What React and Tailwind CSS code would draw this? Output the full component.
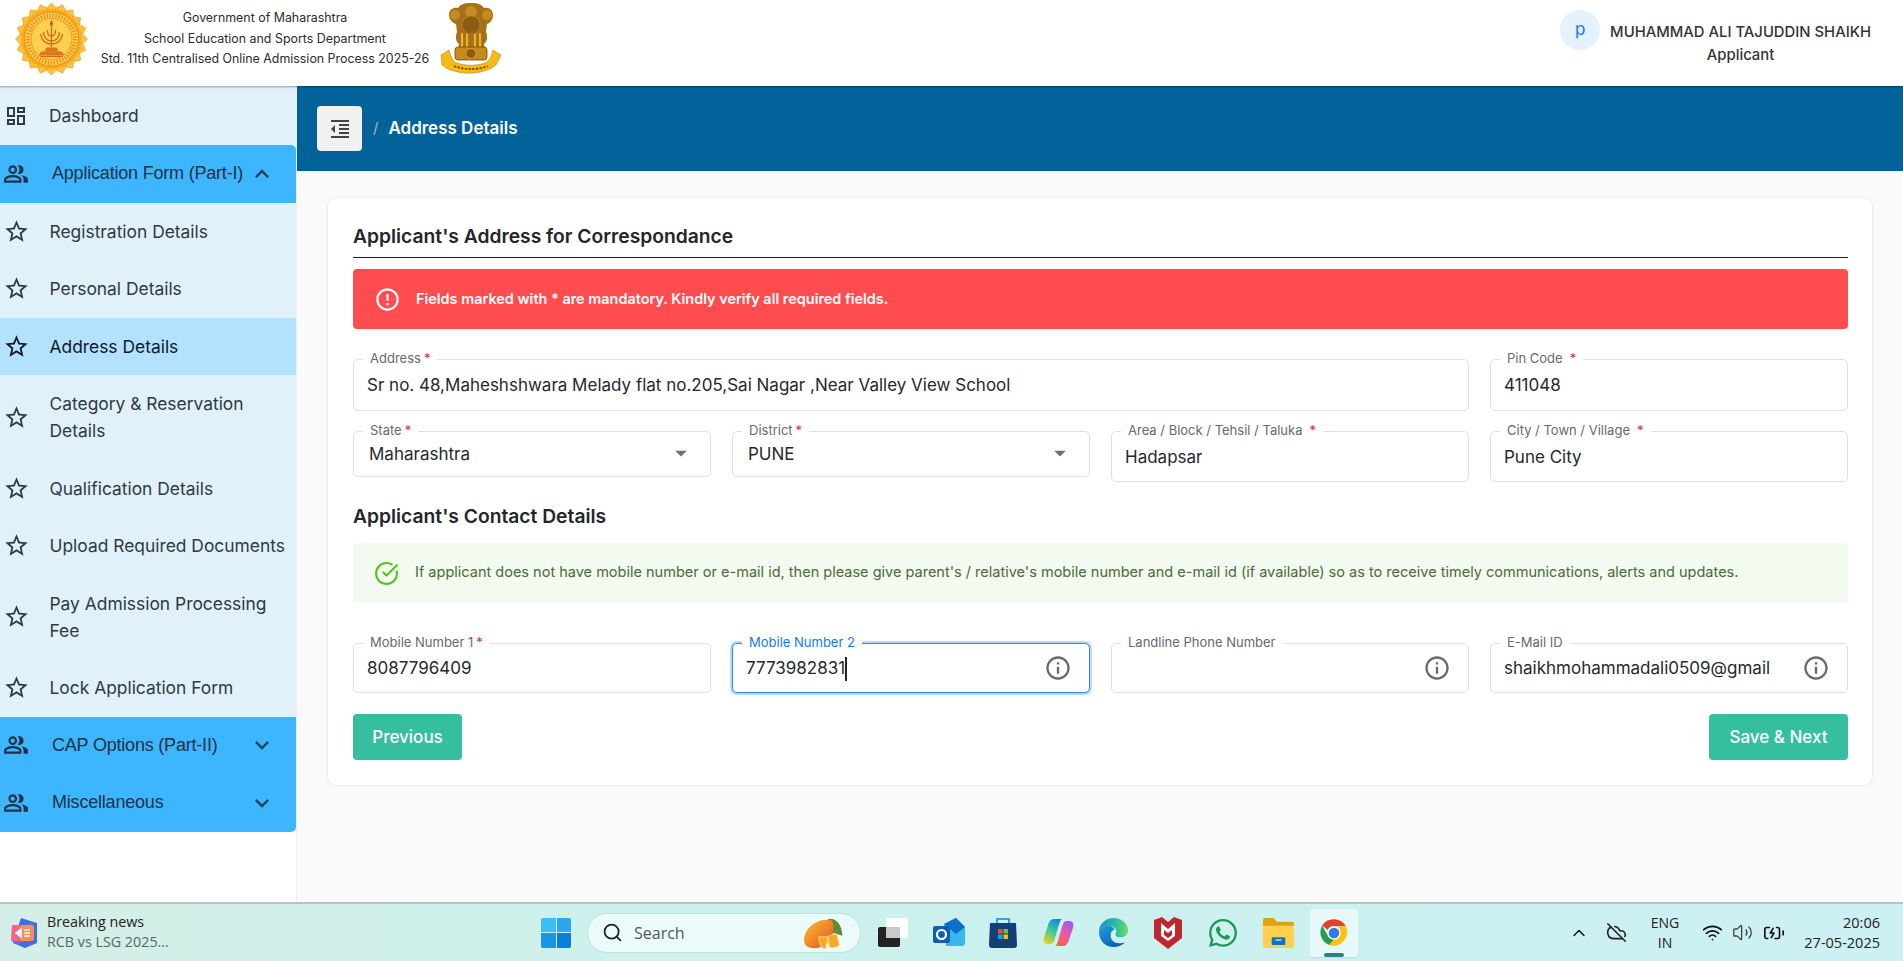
import { MdOutlineDashboard, MdOutlinePeopleAlt, MdStarBorder, MdExpandLess, MdExpandMore, MdFormatIndentDecrease, MdInfoOutline, MdErrorOutline, MdArrowDropDown } from 'react-icons/md'
import { FaWhatsapp } from 'react-icons/fa'
import { CircleCheckBig, Search, ChevronUp, CloudOff, Wifi, Volume2, BatteryCharging } from 'lucide-react'

function Seal() {
  const teeth = Array.from({ length: 20 }, (_, i) => i * 18)
  return (
    <svg viewBox="0 0 72 72" className="w-[73px] h-[72px]">
      {teeth.map(a => <path key={a} d="M30 6 36 0l6 6-6 6z" fill="#fbc23a" stroke="#f0961f" strokeWidth=".6" transform={`rotate(${a} 36 36)`} />)}
      <circle cx="36" cy="36" r="30" fill="#f9a91f" />
      <circle cx="36" cy="36" r="27" fill="#fcd04a" stroke="#ea8a18" strokeWidth="1" />
      <circle cx="36" cy="36" r="23.500" fill="none" stroke="#e07f16" strokeWidth="4" strokeDasharray="1.500 1.500" opacity=".75" />
      <circle cx="36" cy="36" r="20.500" fill="#fdd04f" stroke="#e88a1a" strokeWidth=".8" />
      <path d="M36 17c1.800 2.500 2.500 4.500 0 7-2.500-2.500-1.800-4.500 0-7z" fill="#d9601b" />
      <path d="M36 24v20M25 31c1 6 5 10 11 10s10-4 11-10M28 29c0 5 3 9 8 9s8-4 8-9M32 27c-.5 3 1 6 4 6s4.500-3 4-6" fill="none" stroke="#d4691a" strokeWidth="1.300" />
      <path d="M31 45h10l1 3H30zM26 49h20l2 3H24zM25 53.500h22" fill="#e27d1b" stroke="#d4691a" strokeWidth="1" />
    </svg>
  )
}

function Emblem() {
  return (
    <svg viewBox="0 0 62 72" className="w-[62px] h-[72px]">
      <path d="M9 12c0-6 5-8 9-7 2-3 5-5 13-5s11 2 13 5c4-1 9 1 9 7 0 5-3 8-6 9l-1 8c2 5 1 10-2 12l1 5H18l1-5c-3-2-4-7-2-12l-1-8c-3-1-7-4-7-9z" fill="#a5701a" />
      <circle cx="15" cy="12" r="5" fill="#c48b22" />
      <circle cx="47" cy="12" r="5" fill="#c48b22" />
      <circle cx="31" cy="9" r="6" fill="#c48b22" />
      <circle cx="31" cy="22" r="9" fill="#8c5c14" stroke="#c99426" strokeWidth="1" strokeDasharray="1.500 1" />
      <path d="M22 30v14M27 31v13M35 31v13M40 30v14" stroke="#f2b11f" strokeWidth="2.200" />
      <rect x="15" y="44" width="32" height="13" rx="3" fill="#c6891c" stroke="#6f4a10" strokeWidth=".8" />
      <circle cx="31" cy="50.500" r="5" fill="#8c5c14" stroke="#e2ab2a" strokeWidth=".8" />
      <path d="M1 52 9 47c2 8 4 11 8 13 9 3 19 3 28 0 4-2 6-5 8-13l8 5-5 10c-5 4-8 5-12 6-10 3-20 3-30 0-4-1-7-2-12-6z" fill="#f5bb14" stroke="#a97810" strokeWidth=".5" />
      <path d="M14 63c10 4 24 4 34 0" fill="none" stroke="#7d5710" strokeWidth="1.800" strokeDasharray="2.500 1.200" />
    </svg>
  )
}

function SideItem({ label, active }) {
  return (
    <div className={`flex items-center pl-[6px] py-[15.250px] ${active ? 'bg-[#b2e2ff] text-[#111827]' : 'text-[#2f3a42]'}`}>
      <MdStarBorder className="w-[27px] h-[27px] shrink-0 -ml-[3px]" />
      <span className="ml-[19.500px] max-w-[240px] leading-[27px] text-[17.400px]">{label}</span>
    </div>
  )
}

function SideGroup({ label, open, rounded }) {
  return (
    <div className={`h-[57.500px] flex items-center bg-[#3db6ff] text-[#1f3347] ${rounded}`}>
      <MdOutlinePeopleAlt className="w-[26px] h-[26px] ml-[3px] shrink-0" />
      <span className="ml-[23px] w-[196px] text-[18px] font-['Liberation_Sans',sans-serif] tracking-[-0.2px]">{label}</span>
      {open ? <MdExpandLess className="w-[28px] h-[28px] text-[#1d4560]" /> : <MdExpandMore className="w-[28px] h-[28px] text-[#1d4560]" />}
    </div>
  )
}

function Field({ label, star, value, h = 'h-[51px]', focused, info, select, starGap, caret }) {
  return (
    <div className={`relative rounded-[5px] flex items-center pt-[2px] text-[#26292c] text-[17px] bg-white ${select ? 'pl-[15px]' : 'pl-[13px]'} ${h} ${focused ? 'border border-[#2f86f0] shadow-[0_0_0_2px_#b9d8fb]' : 'border-[1.500px] border-[#dfe0e2]'}`}>
      <span className={`absolute -top-[10px] left-[9px] px-[7px] bg-white text-[13px] leading-[16px] whitespace-nowrap ${focused ? 'text-[#1677ff]' : 'text-[#66696d]'}`}>
        {label}
        {star && <span className={`text-[#e9262c] ${starGap ? 'ml-[7px]' : 'ml-[3px]'}`}>*</span>}
      </span>
      <span className={`overflow-hidden whitespace-nowrap ${info ? 'max-w-[268px]' : ''}`}>{value}</span>
      {caret && <span className="w-[2px] h-[24px] bg-[#1f2430]" />}
      {info && <MdInfoOutline className="absolute right-[17px] top-[10px] w-[28px] h-[28px] text-[#666a6e]" />}
      {select && <MdArrowDropDown className="absolute right-[15px] top-[7px] w-[28px] h-[28px] text-[#6d6f72]" />}
    </div>
  )
}

function Chrome() {
  return (
    <svg viewBox="0 0 48 48" className="w-[30px] h-[30px]">
      <path d="M24 2a22 22 0 0 1 19 11H24a11 11 0 0 0-10 6L5 12A22 22 0 0 1 24 2z" fill="#e0402f" />
      <path d="M5 12l9 16a11 11 0 0 0 11 6l-9 9A22 22 0 0 1 5 12z" fill="#2b9d48" />
      <path d="M43 13a22 22 0 0 1-27 30l9-9a11 11 0 0 0 8-15 11 11 0 0 0-3-6z" fill="#fbc116" />
      <circle cx="24" cy="24" r="10.500" fill="#fff" />
      <circle cx="24" cy="24" r="8.500" fill="#2f7be5" />
    </svg>
  )
}

function TaskIcons() {
  return (
    <div className="flex items-center">
      {/* task view */}
      <div className="w-[32px] h-[30px] ml-[17px] relative">
        <div className="absolute left-[8px] top-0 w-[22px] h-[20px] bg-white rounded-[2px]" />
        <div className="absolute left-0 top-[9px] w-[22px] h-[20px] bg-[#222] rounded-[2px]" />
        <div className="absolute left-[8px] top-[9px] w-[14px] h-[11px] bg-[#c9c9c9]" />
      </div>
      {/* outlook */}
      <svg viewBox="0 0 34 30" className="w-[34px] h-[30px] ml-[22px]">
        <path d="M12 6 24 0l9 9v16a3 3 0 0 1-3 3H14z" fill="#37b7ea" />
        <path d="M12 6 24 0l9 9-9 7z" fill="#0f6fc6" />
        <rect x="1" y="8" width="17" height="17" rx="2" fill="#0c5fb3" />
        <circle cx="9.500" cy="16.500" r="4.500" fill="none" stroke="#fff" strokeWidth="2.200" />
      </svg>
      {/* store */}
      <svg viewBox="0 0 30 32" className="w-[30px] h-[32px] ml-[22px]">
        <path d="M9 7V2h12v5" fill="none" stroke="#29a5e6" strokeWidth="2" />
        <path d="M2 6h26l1 22a3 3 0 0 1-3 3H4a3 3 0 0 1-3-3z" fill="#133f78" />
        <rect x="10" y="12" width="4.500" height="4.500" fill="#e8512d" />
        <rect x="15.500" y="12" width="4.500" height="4.500" fill="#7fbb2f" />
        <rect x="10" y="17.500" width="4.500" height="4.500" fill="#18a2e6" />
        <rect x="15.500" y="17.500" width="4.500" height="4.500" fill="#fbb811" />
      </svg>
      {/* copilot */}
      <svg viewBox="0 0 32 32" className="w-[31px] h-[31px] ml-[25px]">
        <defs>
          <linearGradient id="copA" x1="0.700" y1="0" x2="0.200" y2="1"><stop offset="0" stopColor="#1585e0" /><stop offset=".45" stopColor="#35c6a0" /><stop offset="1" stopColor="#f5cf1c" /></linearGradient>
          <linearGradient id="copB" x1="0.800" y1="0" x2="0.200" y2="1"><stop offset="0" stopColor="#9a5cf0" /><stop offset=".55" stopColor="#f0599c" /><stop offset="1" stopColor="#f7683c" /></linearGradient>
        </defs>
        <path d="M11 2h9c-1 0-2 1-3 4l-5 17c-1 3-2 5-5 5H5c-4 0-5-3-4-7l4-12C6 5 8 2 11 2z" fill="url(#copA)" />
        <path d="M21 30h-9c1 0 2-1 3-4l5-17c1-3 2-5 5-5h2c4 0 5 3 4 7l-4 12c-1 4-3 7-6 7z" fill="url(#copB)" />
      </svg>
      {/* edge */}
      <svg viewBox="0 0 32 32" className="w-[31px] h-[31px] ml-[24px]">
        <defs>
          <linearGradient id="edgeTop" x1="0" y1="0.500" x2="1" y2="0.500"><stop offset="0" stopColor="#1c8fd0" /><stop offset=".6" stopColor="#2cbfa0" /><stop offset="1" stopColor="#6fdc60" /></linearGradient>
          <linearGradient id="edgeLow" x1="0" y1="0" x2="0.700" y2="1"><stop offset="0" stopColor="#1aa0e0" /><stop offset="1" stopColor="#0a5fb0" /></linearGradient>
        </defs>
        <path d="M1 15C1 7 8 1 16 1c9 0 15 6 15 13 0 4-3 7-8 7-3 0-5-1-5-3 0-1 1-2 1-3 0-3-3-6-8-6-6 0-10 3-10 6z" fill="url(#edgeTop)" />
        <path d="M1 15c0 10 7 16 15 16 5 0 9-2 12-5-2 1-4 1-6 1-5 0-9-3-9-8 0-3 1-5 4-6-1-3-4-4-7-4-5 0-9 3-9 6z" fill="url(#edgeLow)" />
      </svg>
      {/* mcafee */}
      <svg viewBox="0 0 28 32" className="w-[28px] h-[32px] ml-[25px]">
        <path d="M0 3l8-3 6 5 6-5 8 3v18l-14 11L0 21z" fill="#c0272d" />
        <path d="M7 6l7 6 7-6v13l-7 5-7-5z" fill="#f4f9f9" />
        <path d="M10 13l4 3 4-3v5l-4 3-4-3z" fill="#c0272d" />
      </svg>
      <FaWhatsapp className="w-[32px] h-[32px] ml-[25px] text-[#1c9a55]" />
      {/* folder */}
      <svg viewBox="0 0 32 32" className="w-[31px] h-[31px] ml-[24px]">
        <path d="M0 3a2 2 0 0 1 2-2h9l3 4h16a2 2 0 0 1 2 2v4H0z" fill="#dda411" />
        <path d="M0 9h32v21a2 2 0 0 1-2 2H2a2 2 0 0 1-2-2z" fill="#ffd14f" />
        <rect x="9" y="21" width="14" height="8" rx="1" fill="#0f74c8" />
        <rect x="13" y="23" width="6" height="1.500" fill="#bfe3ff" />
      </svg>
      {/* chrome, running */}
      <div className="relative w-[48px] h-[48px] ml-[16px] rounded-[4px] bg-[#e6f8f8] shadow-[0_1px_1px_#c2dcdc] flex items-start justify-center pt-[9px]">
        <Chrome />
        <div className="absolute bottom-0 left-[14px] w-[20px] h-[4px] rounded-full bg-[#2a7f92]" />
      </div>
    </div>
  )
}

function Taskbar() {
  return (
    <div className="h-[59px] shrink-0 border-t-2 border-[#b4c4c6] bg-gradient-to-r from-[#d4efe7] via-[#cbf1ee] to-[#cdf0f4] flex items-center font-['Open_Sans',sans-serif] text-[#222]">
      <svg viewBox="0 0 30 30" className="w-[30px] h-[30px] ml-[9px] shrink-0">
        <path d="M12 0l16 5v20l-12 5-12-5z" fill="#3f6ee0" />
        <path d="M4 8l20-3v17L8 26l-6-3z" fill="#8f5cea" opacity=".7" />
        <path d="M3 7h19a3 3 0 0 1 3 3v10a3 3 0 0 1-3 3H5a3 3 0 0 1-3-2z" fill="#f5638d" />
        <path d="M12 7h10a3 3 0 0 1 3 3v10a3 3 0 0 1-3 3H12z" fill="#f98d52" />
        <path d="M7 15l5-4v8zM15 12h6M15 15h6M15 18h6" stroke="#fff" strokeWidth="1.500" fill="#fff" />
      </svg>
      <div className="ml-[8px] w-[494px] shrink-0 leading-[20px] -mt-[2px] text-[14.300px]">
        <div>Breaking news</div>
        <div className="text-[#5a6666]">RCB vs LSG 2025...</div>
      </div>
      {/* windows */}
      <div className="grid grid-cols-2 gap-[1px] w-[30px] h-[30px] shrink-0">
        <div className="bg-[#3dbdf3] rounded-tl-[2px]" />
        <div className="bg-[#2aa8ee] rounded-tr-[2px]" />
        <div className="bg-[#1b93e6] rounded-bl-[2px]" />
        <div className="bg-[#0c7fdc] rounded-br-[2px]" />
      </div>
      <div className="ml-[16px] w-[274px] h-[40px] shrink-0 rounded-full bg-[#ebfbfa] border border-[#bfe0df] flex items-center pl-[14px]">
        <Search className="w-[21px] h-[21px] text-[#222]" strokeWidth={2} />
        <span className="ml-[11px] text-[16px] text-[#555]">Search</span>
        {/* mango */}
        <svg viewBox="0 0 48 36" className="w-[47px] h-[34px] ml-[116px]">
          <path d="M28 3c8-1 14 5 15 18l-13-4z" fill="#5f8a3a" />
          <path d="M32 5c-9-3-21 1-27 11-5 9-3 17 5 18 12 1 20-6 23-15 1-5 1-10-1-14z" fill="url(#mango)" />
          <path d="M18 22h10l-3 13c-4 0-7-5-7-13zM28 21l9-2 3 12c-5 3-9 3-11 2z" fill="#f9a825" stroke="#fde9a6" strokeWidth=".8" />
        </svg>
      </div>
      <TaskIcons />
      <div className="ml-[211px] flex items-center">
        <ChevronUp className="w-[20px] h-[20px] text-[#111]" strokeWidth={1.800} />
        <CloudOff className="w-[21px] h-[21px] ml-[17px] text-[#222]" strokeWidth={1.800} />
        <div className="ml-[22px] text-center text-[14px] leading-[20px] w-[32px]">
          <div>ENG</div>
          <div>IN</div>
        </div>
        <Wifi className="w-[21px] h-[21px] ml-[21px] text-[#111]" strokeWidth={2} />
        <Volume2 className="w-[21px] h-[21px] ml-[9px] text-[#444]" strokeWidth={1.500} />
        <BatteryCharging className="w-[22px] h-[22px] ml-[10px] text-[#111]" strokeWidth={1.800} />
        <div className="ml-[15px] w-[80px] text-right text-[14.500px] leading-[20px] whitespace-nowrap">
          <div>20:06</div>
          <div>27-05-2025</div>
        </div>
      </div>
    </div>
  )
}

export default function App() {
  return (
    <div className="h-[961px] w-[1903px] flex flex-col overflow-hidden font-['Inter',sans-serif] bg-[#fafafa]">
      <svg className="w-0 h-0 absolute">
        <defs>
          <linearGradient id="mango" x1="0" y1="0" x2="1" y2="1"><stop offset="0" stopColor="#f7c52e" /><stop offset=".6" stopColor="#ef7b2a" /><stop offset="1" stopColor="#d94a22" /></linearGradient>
        </defs>
      </svg>

      {/* header */}
      <header className="h-[86px] shrink-0 bg-white flex items-start relative z-10 shadow-[0_1px_2px_rgba(0,0,0,0.35)]">
        <div className="ml-[15px] mt-[3px]"><Seal /></div>
        <div className="ml-[9px] w-[336px] mt-[8px] text-center text-[12.400px] leading-[20.500px] text-[#2b2b2b]">
          <div>Government of Maharashtra</div>
          <div>School Education and Sports Department</div>
          <div className="whitespace-nowrap">Std. 11th Centralised Online Admission Process 2025-26</div>
        </div>
        <div className="ml-[7px] mt-[3px]"><Emblem /></div>
        <div className="ml-auto mr-[32px] pt-[10px] flex items-start">
          <div className="w-[40px] h-[40px] rounded-full bg-[#e3f2fd] text-[#1677ff] flex items-center justify-center text-[17px]">p</div>
          <div className="ml-[10px] mt-[11px] text-center text-[14.850px] font-medium text-[#333] leading-[23px] whitespace-nowrap">
            <div>MUHAMMAD ALI TAJUDDIN SHAIKH</div>
            <div>Applicant</div>
          </div>
        </div>
      </header>

      <div className="flex-1 flex min-h-0">
        {/* sidebar */}
        <aside className="w-[297px] shrink-0 bg-white border-r border-[#eeeeee]">
          <div className="h-[59px] pt-[1px] bg-[#e0f1f9] flex items-center text-[#2f3a42]">
            <MdOutlineDashboard className="w-[24px] h-[24px] ml-[4px]" />
            <span className="ml-[21px] text-[17.400px]">Dashboard</span>
          </div>
          <SideGroup label="Application Form (Part-I)" open rounded="rounded-tr-[5px]" />
          <div className="bg-[#e0f1f9]">
            <SideItem label="Registration Details" />
            <SideItem label="Personal Details" />
            <SideItem label="Address Details" active />
            <SideItem label="Category & Reservation Details" />
            <SideItem label="Qualification Details" />
            <SideItem label="Upload Required Documents" />
            <SideItem label="Pay Admission Processing Fee" />
            <SideItem label="Lock Application Form" />
          </div>
          <SideGroup label="CAP Options (Part-II)" />
          <SideGroup label="Miscellaneous" rounded="rounded-br-[5px]" />
        </aside>

        {/* main */}
        <main className="flex-1 min-w-0">
          <div className="h-[85px] bg-[#02639b] flex items-center pl-[20px]">
            <div className="w-[45px] h-[45px] rounded-[4px] bg-[#f1f1f1] flex items-center justify-center text-[#444]">
              <MdFormatIndentDecrease className="w-[24px] h-[24px]" />
            </div>
            <span className="ml-[11px] text-[#a9b9c4] text-[15px]">/</span>
            <span className="ml-[10px] pt-[1px] text-white font-semibold text-[17px]">Address Details</span>
          </div>

          <div className="mx-[30px] mt-[26px] h-[589px] rounded-[10px] border border-[#ececef] bg-white pt-[22px] pl-[25px] pr-[24px]">
            <div className="h-[38px] border-b border-[#1f1f1f] text-[19.250px] font-semibold text-[#23262a] leading-[32px]">Applicant's Address for Correspondance</div>

            <div className="mt-[11px] h-[60px] rounded-[4px] bg-[#ff4d4f] flex items-center pl-[21px] text-white">
              <MdErrorOutline className="w-[27px] h-[27px]" />
              <span className="ml-[15px] text-[14.450px] font-semibold">Fields marked with * are mandatory. Kindly verify all required fields.</span>
            </div>

            <div className="mt-[30px] grid grid-cols-4 gap-x-[21px] gap-y-[20px] items-start">
              <div className="col-span-3"><Field label="Address" star value="Sr no. 48,Maheshshwara Melady flat no.205,Sai Nagar ,Near Valley View School" h="h-[52px]" /></div>
              <Field label="Pin Code" star starGap value="411048" h="h-[52px]" />
              <Field label="State" star value="Maharashtra" h="h-[46px]" select />
              <Field label="District" star value="PUNE" h="h-[46px]" select />
              <Field label="Area / Block / Tehsil / Taluka" star starGap value="Hadapsar" />
              <Field label="City / Town / Village" star starGap value="Pune City" />
            </div>

            <div className="h-[61px] pt-[8px] flex items-center text-[19.250px] font-semibold text-[#23262a]">Applicant's Contact Details</div>

            <div className="h-[60px] rounded-[4px] bg-[#f3faef] flex items-center pl-[21px]">
              <CircleCheckBig className="w-[25px] h-[25px] text-[#52c41a]" strokeWidth={2} />
              <span className="ml-[16px] text-[14.530px] text-[#4c6b3a] whitespace-nowrap">If applicant does not have mobile number or e-mail id, then please give parent's / relative's mobile number and e-mail id (if available) so as to receive timely communications, alerts and updates.</span>
            </div>

            <div className="mt-[40px] grid grid-cols-4 gap-x-[21px]">
              <Field label="Mobile Number 1" star value="8087796409" h="h-[50px]" />
              <Field label="Mobile Number 2" value="7773982831" h="h-[50px]" focused info caret />
              <Field label="Landline Phone Number" value="" h="h-[50px]" info />
              <Field label="E-Mail ID" value="shaikhmohammadali0509@gmail" h="h-[50px]" info />
            </div>

            <div className="mt-[21px] flex justify-between">
              <button className="w-[109px] h-[46px] pt-[1px] rounded-[4px] bg-[#35bf9f] text-white text-[17px] font-medium">Previous</button>
              <button className="w-[139px] h-[46px] pt-[1px] rounded-[4px] bg-[#35bf9f] text-white text-[17px] font-medium">Save & Next</button>
            </div>
          </div>
        </main>
      </div>

      <Taskbar />
    </div>
  )
}
